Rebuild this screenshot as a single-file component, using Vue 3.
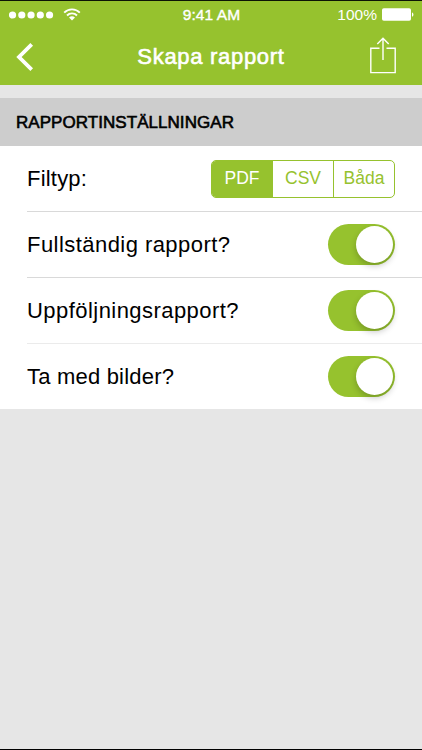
<template>
  <div class="screen">
    <header class="header">
      <div class="status">
        <div class="status__left">
          <svg class="dots" width="46" height="8" viewBox="0 0 46 8">
            <circle v-for="n in 5" :key="n" :cx="n * 9.25 - 5.7" cy="4" r="3.6" fill="#fff" />
          </svg>
          <svg class="wifi" width="18" height="13" viewBox="0 0 18 13">
            <g fill="none" stroke="#fff" stroke-width="1.9">
              <path d="M1.2 4.6a11 11 0 0 1 15.6 0" />
              <path d="M4 7.5a7 7 0 0 1 10 0" />
            </g>
            <path d="M6 9.6a4.3 4.3 0 0 1 6 0L9 12.6z" fill="#fff" />
          </svg>
        </div>
        <div class="status__time">9:41 AM</div>
        <div class="status__right">
          <span class="status__percent">100%</span>
          <svg width="32" height="13" viewBox="0 0 32 13">
            <rect x="0" y="0.3" width="29" height="12.4" rx="1.8" fill="#fff" />
            <path d="M30 4.4c1.9.4 1.9 3.8 0 4.2z" fill="#fff" />
          </svg>
        </div>
      </div>
      <nav class="nav">
        <button class="nav__btn" aria-label="Tillbaka">
          <svg width="18" height="28" viewBox="0 0 18 28">
            <path d="M15.7 1.4L3 14l12.7 12.6" fill="none" stroke="#fff" stroke-width="3.8" />
          </svg>
        </button>
        <h1 class="nav__title">Skapa rapport</h1>
        <button class="nav__btn nav__btn--share" aria-label="Dela">
          <svg width="26" height="37" viewBox="0 0 26 37">
            <g fill="none" stroke="#fff" stroke-width="1.4">
              <path d="M9.5 11.2H.8v24.4h24.4V11.2h-8.7" />
              <path d="M13 23V1.5M7.3 7L13 1.3 18.7 7" />
            </g>
          </svg>
        </button>
      </nav>
    </header>

    <h2 class="section">RAPPORTINSTÄLLNINGAR</h2>

    <div class="list">
      <div class="row">
        <span class="row__label">Filtyp:</span>
        <div class="segment">
          <button
            v-for="type in types"
            :key="type"
            class="segment__item"
            :class="{ 'segment__item--active': type === fileType }"
            @click="fileType = type"
          >
            {{ type }}
          </button>
        </div>
      </div>
      <div v-for="option in options" :key="option.label" class="row">
        <span class="row__label">{{ option.label }}</span>
        <button
          class="switch"
          :class="{ 'switch--on': option.enabled }"
          :aria-label="option.label"
          @click="option.enabled = !option.enabled"
        >
          <span class="switch__knob"></span>
        </button>
      </div>
    </div>
  </div>
</template>

<script setup>
import { ref } from "vue"

const types = ["PDF", "CSV", "Båda"]
const fileType = ref("PDF")

const options = ref([
  { label: "Fullständig rapport?", enabled: true },
  { label: "Uppföljningsrapport?", enabled: true },
  { label: "Ta med bilder?", enabled: true }
])
</script>

<style>
body {
  background: #e6e6e6;
}
</style>

<style scoped>
.screen {
  box-sizing: border-box;
  height: 750px;
  overflow: hidden;
  border-top: 1px solid #0c1404;
  border-bottom: 1px solid #000;
  background: #e6e6e6;
  font-family: "Liberation Sans", Arial, sans-serif;
  color: #000;
}
button {
  padding: 0;
  border: none;
  background: none;
  font-family: inherit;
}
svg {
  display: block;
}
.header {
  height: 84px;
  background: #96c22e;
  color: #fff;
}
.status {
  display: grid;
  grid-template-columns: 1fr auto 1fr;
  align-items: center;
  height: 27px;
  padding: 0 8px 0 9px;
}
.status__left {
  display: flex;
  align-items: center;
  gap: 8px;
}
.status__time {
  font-size: 15.5px;
  letter-spacing: 0.1px;
  -webkit-text-stroke: 0.4px #fff;
}
.status__right {
  display: flex;
  align-items: center;
  justify-content: flex-end;
  gap: 5px;
}
.status__percent {
  font-size: 15.5px;
}
.nav {
  display: grid;
  grid-template-columns: 1fr auto 1fr;
  align-items: center;
  height: 57px;
  padding: 0 16px;
}
.nav__btn {
  justify-self: start;
}
.nav__btn--share {
  justify-self: end;
  margin: 0 10px 2px 0;
}
.nav__title {
  margin: 0;
  font-size: 22px;
  font-weight: 400;
  letter-spacing: 0.7px;
  -webkit-text-stroke: 0.6px #fff;
}
.section {
  display: flex;
  align-items: center;
  box-sizing: border-box;
  height: 48px;
  margin: 13px 0 0;
  padding: 2px 0 0 16px;
  background: #cdcdcd;
  font-size: 17px;
  font-weight: 400;
  letter-spacing: 0.05px;
  -webkit-text-stroke: 0.6px #000;
}
.list {
  background: #fff;
}
.row {
  display: flex;
  align-items: center;
  justify-content: space-between;
  box-sizing: border-box;
  height: 66px;
  margin-left: 27px;
  padding-right: 27px;
  border-bottom: 1px solid #d9d9d9;
}
.row:nth-child(3) {
  border-color: #ebebeb;
}
.row:last-child {
  height: 65px;
  border-bottom: none;
}
.row__label {
  font-size: 22px;
  letter-spacing: 0.45px;
}
.row:first-child .row__label,
.row:last-child .row__label {
  letter-spacing: 0.2px;
}
.segment {
  display: flex;
  box-sizing: border-box;
  width: 184px;
  height: 38px;
  overflow: hidden;
  border: 1px solid #96c22e;
  border-radius: 5px;
}
.segment__item {
  flex: 1;
  border-left: 1px solid #96c22e;
  font-size: 17.5px;
  color: #96c22e;
}
.segment__item:first-child {
  border-left: none;
}
.segment__item--active {
  background: #96c22e;
  color: #fff;
}
.switch {
  display: flex;
  align-items: center;
  width: 67px;
  height: 41px;
  padding: 0 2px;
  border-radius: 21px;
  background: #d9d9d9;
}
.switch--on {
  justify-content: flex-end;
  background: #96c22e;
}
.switch__knob {
  width: 37px;
  height: 37px;
  border-radius: 50%;
  background: #fff;
  box-shadow: 0 3px 6px rgba(0, 0, 0, 0.22);
}
</style>
